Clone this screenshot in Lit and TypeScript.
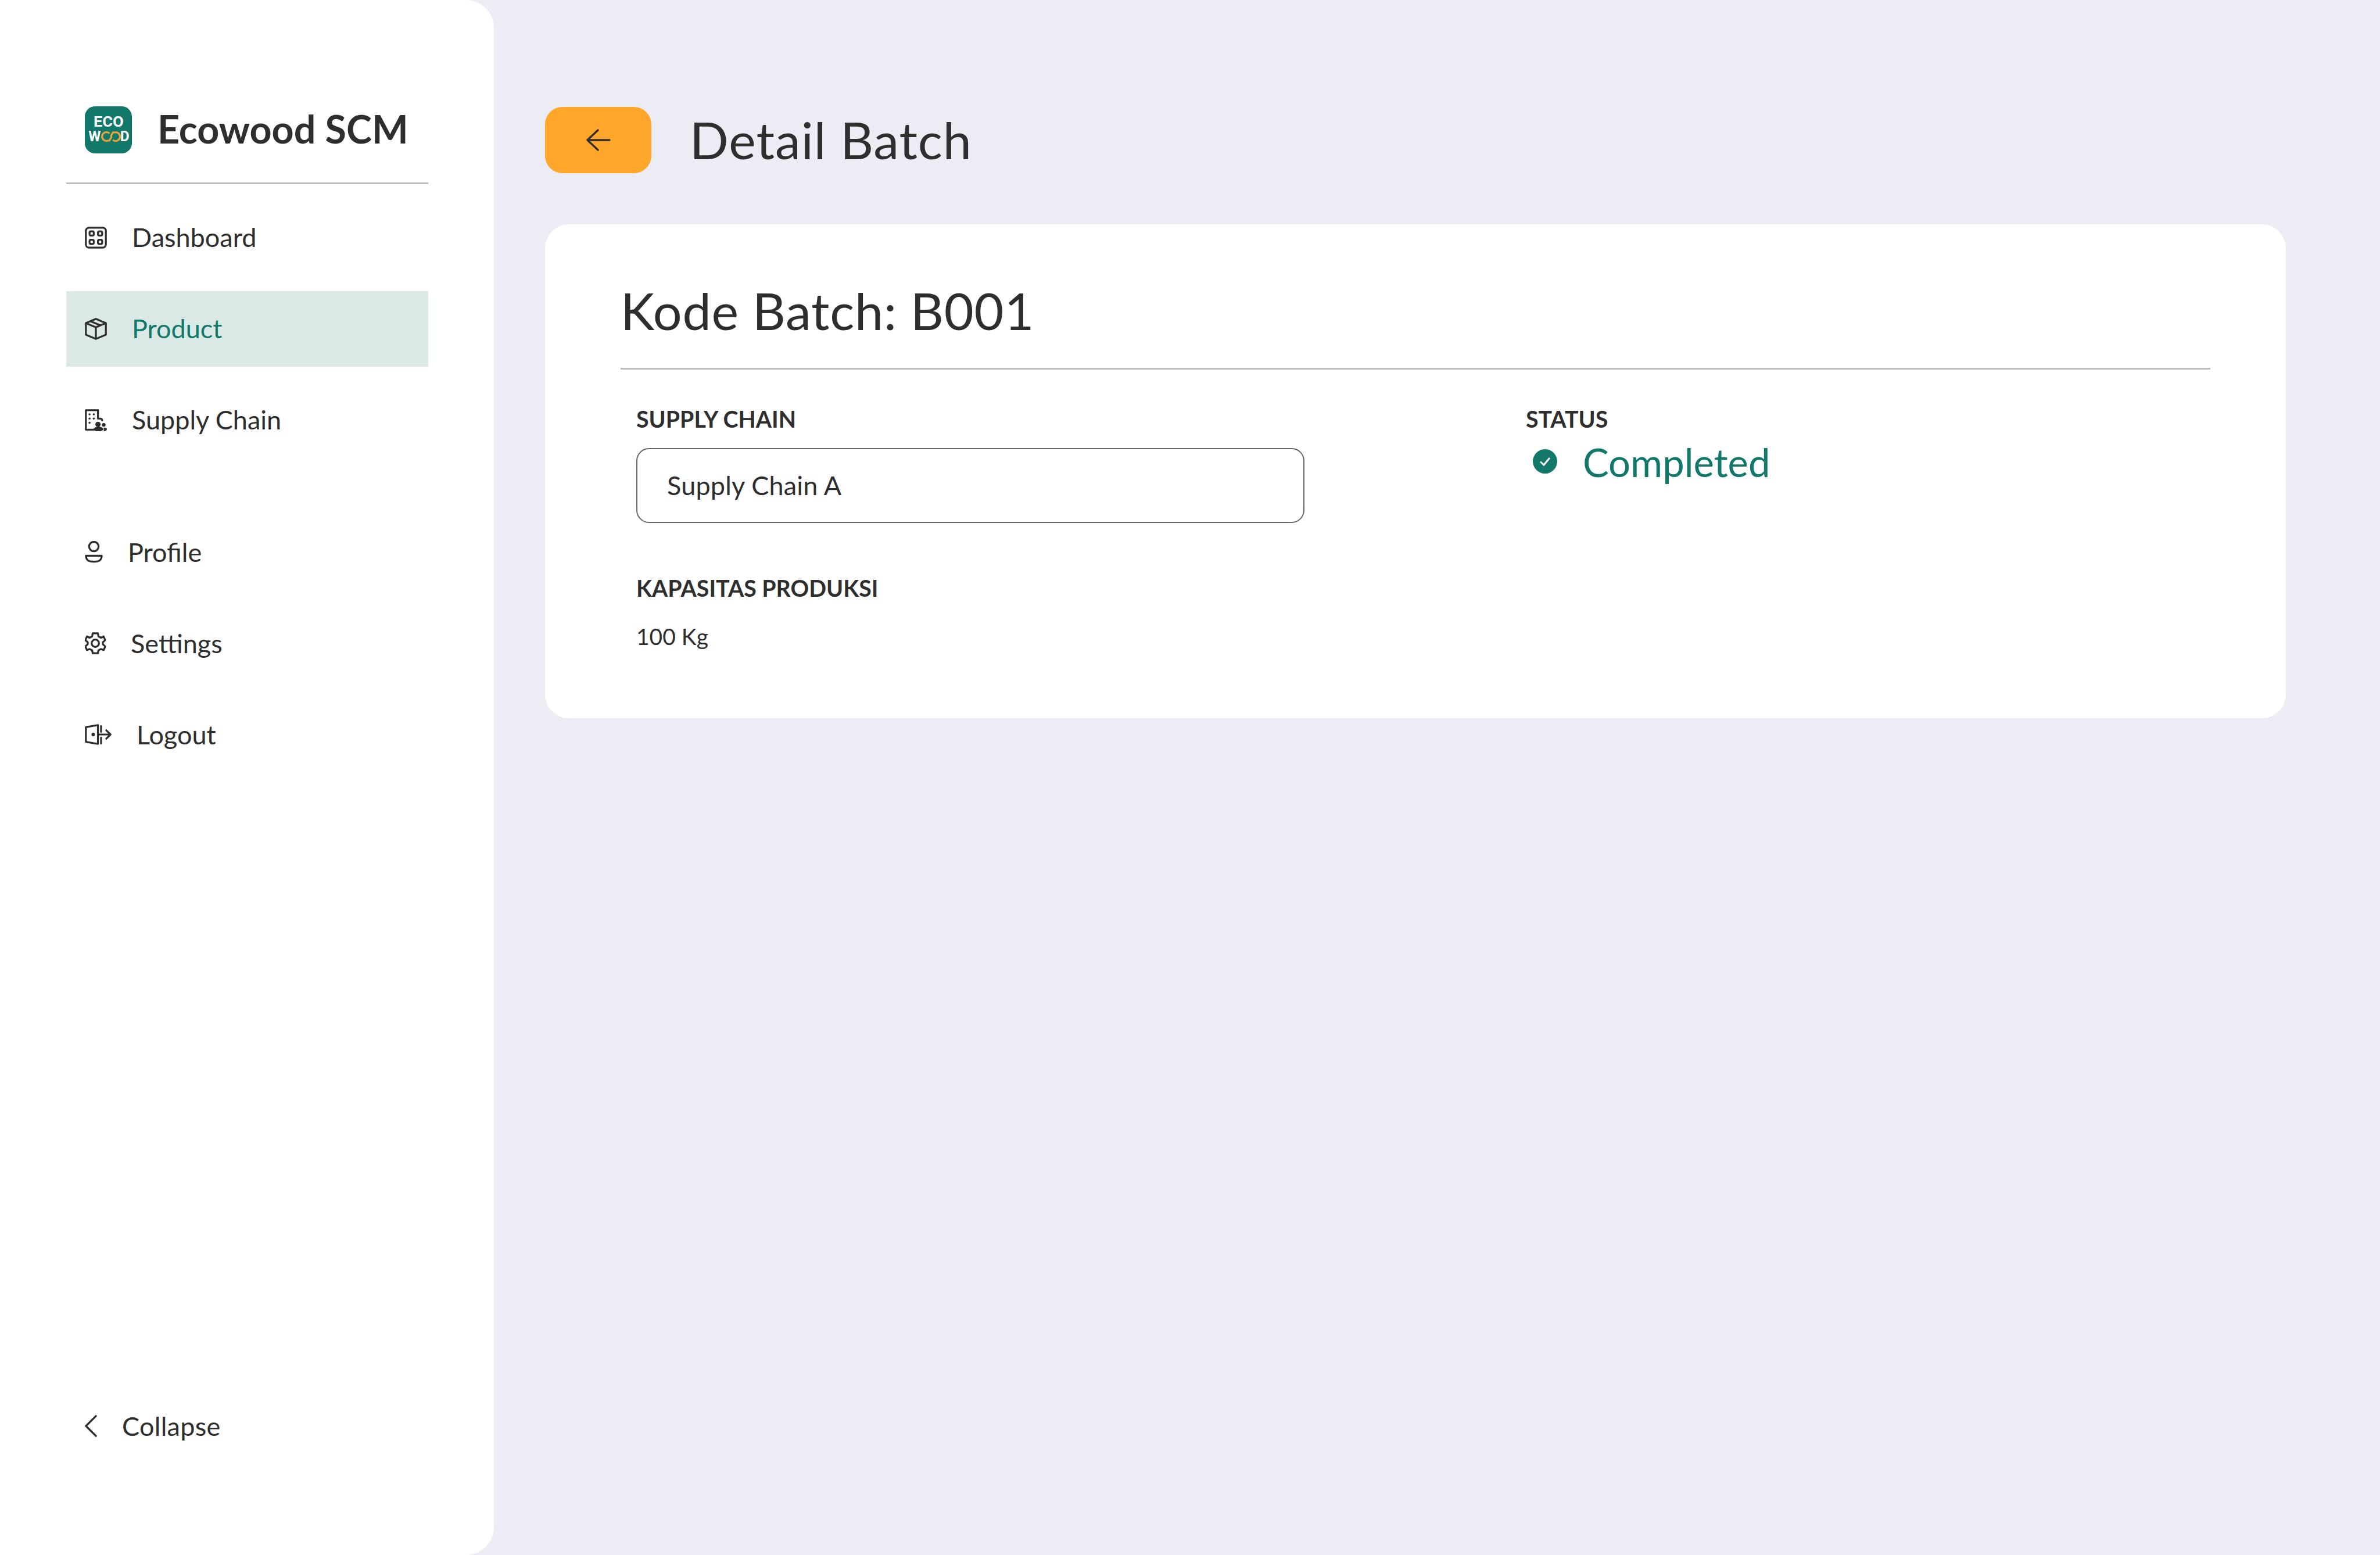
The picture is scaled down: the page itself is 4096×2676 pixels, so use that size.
import { LitElement, html, css, svg } from "lit";
import { customElement } from "lit/decorators.js";

const icons: Record<string, unknown> = {
  dashboard: svg`<svg class="i" width="38" height="38" viewBox="0 0 42 42" fill="none" stroke="currentColor" stroke-width="3.6"><rect x="2" y="2" width="38" height="38" rx="6"/><rect x="9" y="9" width="8" height="8" rx="2.500"/><rect x="25" y="9" width="8" height="8" rx="2.500"/><rect x="9" y="25" width="8" height="8" rx="2.500"/><rect x="25" y="25" width="8" height="8" rx="2.500"/></svg>`,
  product: svg`<svg class="i" width="38" height="38" viewBox="0 0 42 42" fill="none" stroke="currentColor" stroke-width="3.6" stroke-linejoin="round"><path d="M21 2 40 10V32L21 40 2 32V10Z"/><path d="M2 10 21 18 40 10M21 18V40M11 6.500 30 14.500"/></svg>`,
  supply: svg`<svg class="i" width="38" height="38" viewBox="0 0 42 42" fill="none" stroke="currentColor" stroke-width="3.6" stroke-linejoin="round"><path d="M20 39H2V2H25V18H30Q33 18 33 23"/><g fill="currentColor" stroke="none"><circle cx="9" cy="10" r="2"/><circle cx="17" cy="10" r="2"/><circle cx="9" cy="18" r="2"/><circle cx="17" cy="18" r="2"/><circle cx="9" cy="26" r="2"/><circle cx="25" cy="29" r="5"/><circle cx="36" cy="30" r="3.400"/><ellipse cx="26" cy="38" rx="9" ry="4.500"/><path d="M36 35c4 0 6 1 6 3s-2 4-6 4z"/></g></svg>`,
  profile: svg`<svg class="i" width="31" height="38" viewBox="0 0 34 42" fill="none" stroke="currentColor" stroke-width="3.600" stroke-linejoin="round"><circle cx="17" cy="10.500" r="9"/><path d="M2 28H32C32 28 32 34 28 37 24 40 10 40 6 37 2 34 2 28 2 28Z"/></svg>`,
  settings: svg`<svg class="i" width="36" height="38" viewBox="0 0 40 42" fill="none" stroke="currentColor" stroke-width="3.600" stroke-linejoin="round"><circle cx="20" cy="21" r="7"/><path d="M15 2H25L26 8 31 10.500 36 8 39 15 34.500 19V23L39 27 36 34 31 32 26 34.500 25 40H15L14 34.500 9 32 4 34 1 27 5.500 23V19L1 15 4 8 9 10.500 14 8Z"/></svg>`,
  logout: svg`<svg class="i" width="46" height="38" viewBox="0 0 51 42" fill="none" stroke="currentColor" stroke-width="3.600" stroke-linejoin="round" stroke-linecap="round"><path d="M2 7 25 3V39L2 35Z"/><circle cx="16" cy="21" r="1.500" fill="currentColor"/><path d="M31 5V16M31 27V38M26 21H49M41 13 49 21 41 29"/></svg>`,
  collapse: svg`<svg class="i" width="21" height="38" viewBox="0 0 23 42" fill="none" stroke="currentColor" stroke-width="3.600" stroke-linecap="round" stroke-linejoin="round"><path d="M21 2 2 21 21 40"/></svg>`,
};

@customElement("app-root")
export class AppRoot extends LitElement {
  static styles = css`
    :host { display: block; width: 4096px; height: 2676px; background: #ebecf4; color: #2e2e2e; font-family: Lato, "Noto Sans", sans-serif; overflow: hidden; }
    * { box-sizing: border-box; }
    .page { display: flex; height: 100%; }
    .side { width: 850px; flex: none; height: 100%; background: #fff; border-radius: 0 48px 48px 0; padding: 183px 113px 0 114px; display: flex; flex-direction: column; }
    .brand { display: flex; align-items: center; gap: 44px; height: 81px; padding-left: 32px; }
    .logo { width: 81px; height: 81px; flex: none; display: block; }
    .brand span { font-size: 66.400px; font-weight: 700; line-height: 1; padding-bottom: 4px; }
    .rule { height: 3px; background: #bdbdbd; flex: none; }
    .side .rule { margin-top: 50px; margin-bottom: 27px; }
    .nav { display: flex; flex-direction: column; gap: 27.500px; }
    .nav + .nav { margin-top: 98px; }
    .item { height: 129.500px; display: flex; align-items: center; gap: 43px; padding-left: 32px; font-size: 45px; line-height: 1; }
    .item.on { background: #dbe9e6; color: #11786a; }
    .item.on .i { color: #2e2e2e; }
    .i { flex: none; display: block; }
    .collapse { margin-top: auto; margin-bottom: 157px; }
    .collapse span { letter-spacing: 0.3px; }
    .main { flex: 1; padding: 184px 162px 0 88px; min-width: 0; }
    .head { display: flex; align-items: center; gap: 66px; height: 114px; }
    .back { width: 183px; height: 114px; flex: none; background: #ffa62b; border-radius: 30px; display: flex; align-items: center; justify-content: center; }
    h1, h2 { margin: 0; font-size: 88px; font-weight: 400; line-height: 1; letter-spacing: 0.8px; }
    h1 { padding-bottom: 3px; letter-spacing: 1px; }
    .card { margin-top: 88px; height: 850px; background: #fff; border-radius: 41px; padding: 104px 130px 0; }
    .card .rule { margin-top: 55px; }
    .grid { display: grid; grid-template-columns: 1531px 1fr; padding: 0 0 0 27px; margin-top: 65px; }
    .label { font-size: 39.300px; font-weight: 700; line-height: 1; display: block; }
    .input { width: 1150px; height: 129px; margin-top: 31px; border: 2.700px solid #666; border-radius: 22px; display: flex; align-items: center; padding-left: 51px; font-size: 45px; line-height: 1; letter-spacing: 0.2px; }
    .cap { margin-top: 92px; }
    .val { margin-top: 44px; font-size: 39px; line-height: 1; }
    .status { display: flex; align-items: center; gap: 44px; margin-top: 18px; padding-left: 12px; color: #11786a; font-size: 67px; line-height: 1; }
    .status span { padding-top: 4px; }
  `;

  render() {
    return html`<div class="page">
      <aside class="side">
        <div class="brand">
          <svg class="logo" viewBox="0 0 92 92">
            <rect width="92" height="92" rx="20" fill="#11786a"/>
            <g font-family="Roboto, sans-serif" font-weight="700" font-size="29" fill="#fff">
              <text x="17" y="40" textLength="59" lengthAdjust="spacingAndGlyphs">ECO</text>
              <text x="7" y="68" textLength="24" lengthAdjust="spacingAndGlyphs">W</text>
              <text x="69" y="68" textLength="18" lengthAdjust="spacingAndGlyphs">D</text>
            </g>
            <g fill="none" stroke="#eba33a" stroke-width="3.600" stroke-linecap="round"><path d="M47 52A8.500 8.500 0 1 0 45 67H48L52 60"/><path d="M56 66.500A8.500 8.500 0 1 0 58 51H55L51 58"/></g>
          </svg>
          <span>Ecowood SCM</span>
        </div>
        <div class="rule"></div>
        <nav class="nav">
          <div class="item">${icons.dashboard}<span>Dashboard</span></div>
          <div class="item on">${icons.product}<span>Product</span></div>
          <div class="item">${icons.supply}<span>Supply Chain</span></div>
        </nav>
        <nav class="nav">
          <div class="item">${icons.profile}<span>Profile</span></div>
          <div class="item">${icons.settings}<span>Settings</span></div>
          <div class="item">${icons.logout}<span>Logout</span></div>
        </nav>
        <div class="item collapse">${icons.collapse}<span>Collapse</span></div>
      </aside>
      <main class="main">
        <div class="head">
          <div class="back"><svg width="42" height="38" viewBox="0 0 42 38" fill="none" stroke="#2e2e2e" stroke-width="3.400" stroke-linecap="round" stroke-linejoin="round"><path d="M40 19H2M20 2 2 19 20 36"/></svg></div>
          <h1>Detail Batch</h1>
        </div>
        <section class="card">
          <h2>Kode Batch: B001</h2>
          <div class="rule"></div>
          <div class="grid">
            <div>
              <span class="label">SUPPLY CHAIN</span>
              <div class="input">Supply Chain A</div>
              <span class="label cap">KAPASITAS PRODUKSI</span>
              <div class="val">100 Kg</div>
            </div>
            <div>
              <span class="label">STATUS</span>
              <div class="status">
                <svg width="42" height="42" viewBox="0 0 42 42"><circle cx="21" cy="21" r="21" fill="#11786a"/><path d="M13 21.500 19 27 29 15" fill="none" stroke="#fff" stroke-width="3"/></svg>
                <span>Completed</span>
              </div>
            </div>
          </div>
        </section>
      </main>
    </div>`;
  }
}
